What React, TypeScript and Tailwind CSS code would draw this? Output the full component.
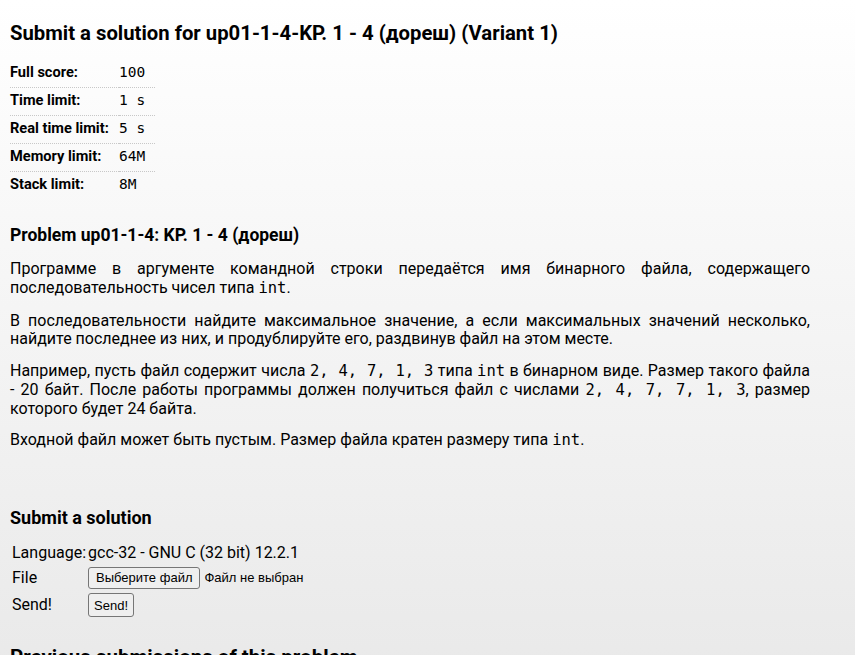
const LIMITS = [
  { label: 'Full score:', value: '100' },
  { label: 'Time limit:', value: '1 s' },
  { label: 'Real time limit:', value: '5 s' },
  { label: 'Memory limit:', value: '64M' },
  { label: 'Stack limit:', value: '8M' },
];

const mono = "font-['DejaVu_Sans_Mono',monospace]";

function Code({ children }: { children: React.ReactNode }) {
  return <span className={`${mono} text-[15.5px] leading-none`}>{children}</span>;
}

export default function App() {
  return (
    <div className="min-h-screen bg-gradient-to-b from-white to-[#e8e8e8] font-['Roboto',sans-serif] text-black">
      <div className="w-[820px] px-[10px] pt-[19px] pb-10">
        <h1 className="text-[20.3px] font-bold leading-[28px]">
          Submit a solution for up01-1-4-KP. 1 - 4 (дореш) (Variant 1)
        </h1>

        {/* Limits */}
        <table className="mt-[12px] border-collapse">
          <tbody>
            {LIMITS.map((row, i) => (
              <tr
                key={row.label}
                className={i < LIMITS.length - 1 ? 'border-b border-dotted border-[#c8c8c8]' : ''}
              >
                <td className="w-[109px] h-[28px] text-[14.6px] font-bold align-middle whitespace-nowrap">{row.label}</td>
                <td className={`${mono} text-[14.5px] pr-[10px] align-middle whitespace-pre`}>{row.value}</td>
              </tr>
            ))}
          </tbody>
        </table>

        {/* Problem statement */}
        <h2 className="mt-[23px] text-[17.5px] font-bold leading-[26px]">Problem up01-1-4: KP. 1 - 4 (дореш)</h2>
        <div className="text-[16px] leading-[18.75px] text-justify">
          <p className="mt-[12px]">
            Программе в аргументе командной строки передаётся имя бинарного файла, содержащего
            последовательность чисел типа <Code>int</Code>.
          </p>
          <p className="mt-[14px]">
            В последовательности найдите максимальное значение, а если максимальных значений несколько,
            найдите последнее из них, и продублируйте его, раздвинув файл на этом месте.
          </p>
          <p className="mt-[13px]">
            Например, пусть файл содержит числа <Code>2, 4, 7, 1, 3</Code> типа <Code>int</Code> в
            бинарном виде. Размер такого файла - 20 байт. После работы программы должен получиться файл с
            числами <Code>2, 4, 7, 7, 1, 3</Code>, размер которого будет 24 байта.
          </p>
          <p className="mt-[13px]">
            Входной файл может быть пустым. Размер файла кратен размеру типа <Code>int</Code>.
          </p>
        </div>

        {/* Submit form */}
        <h2 className="mt-[55px] text-[18px] font-bold leading-[26px]">Submit a solution</h2>
        <table className="mt-[9px] ml-[2px] text-[16px]">
          <tbody>
            <tr>
              <td className="h-[25px] pr-[2px]">Language:</td>
              <td>gcc-32 - GNU C (32 bit) 12.2.1</td>
            </tr>
            <tr>
              <td className="h-[25px]">File</td>
              <td>
                <div className="flex items-center gap-[4px] font-['Liberation_Sans',sans-serif] text-[13px]">
                  <button className="h-[22px] px-[7px] border border-[#767676] rounded-[3px] bg-[#efefef]">
                    Выберите файл
                  </button>
                  <span>Файл не выбран</span>
                </div>
              </td>
            </tr>
            <tr>
              <td className="h-[30px]">Send!</td>
              <td>
                <button className="h-[24px] w-[46px] border border-[#767676] rounded-[3px] bg-[#efefef] font-['Liberation_Sans',sans-serif] text-[13px]">
                  Send!
                </button>
              </td>
            </tr>
          </tbody>
        </table>

        <h2 className="mt-[23px] text-[20.5px] font-bold leading-[28px]">Previous submissions of this problem</h2>
      </div>
    </div>
  );
}
